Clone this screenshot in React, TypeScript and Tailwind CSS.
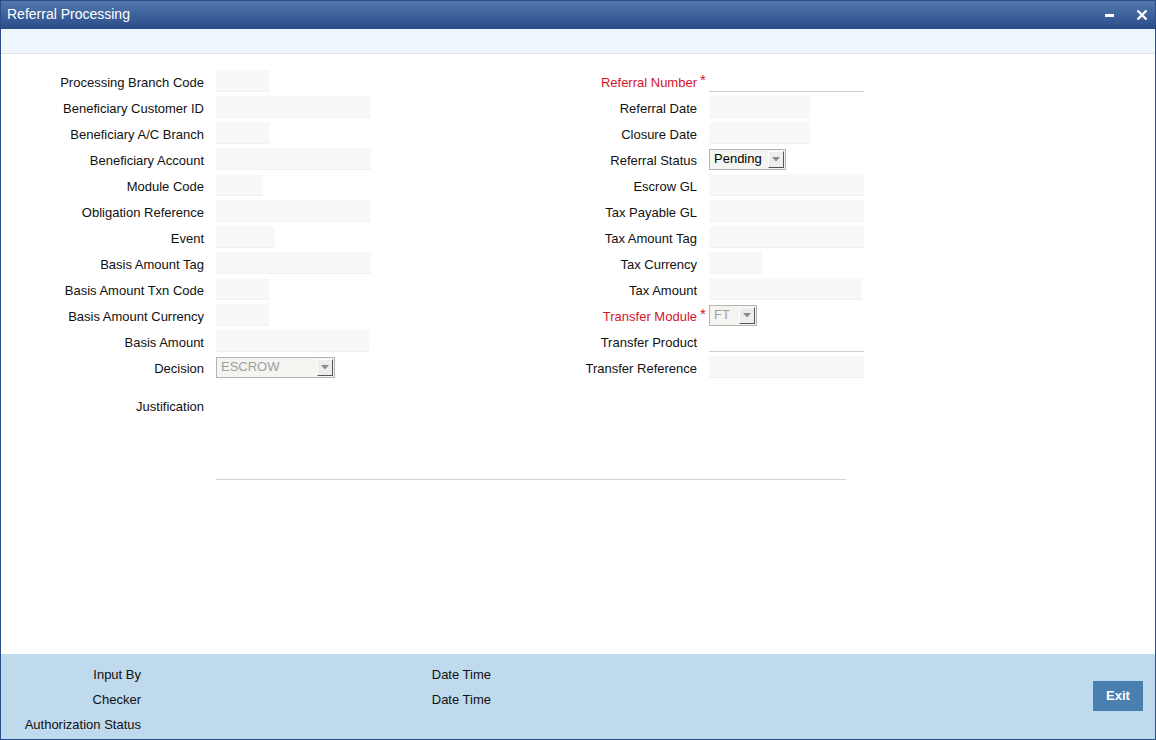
import React from "react";

type Field =
  | { kind: "input"; w: number }
  | { kind: "line"; w: number }
  | { kind: "select"; w: number; value: string; disabled?: boolean };

interface Row {
  label: string;
  required?: boolean;
  field: Field;
}

const leftRows: Row[] = [
  { label: "Processing Branch Code", field: { kind: "input", w: 53 } },
  { label: "Beneficiary Customer ID", field: { kind: "input", w: 155 } },
  { label: "Beneficiary A/C Branch", field: { kind: "input", w: 53 } },
  { label: "Beneficiary Account", field: { kind: "input", w: 155 } },
  { label: "Module Code", field: { kind: "input", w: 47 } },
  { label: "Obligation Reference", field: { kind: "input", w: 155 } },
  { label: "Event", field: { kind: "input", w: 59 } },
  { label: "Basis Amount Tag", field: { kind: "input", w: 155 } },
  { label: "Basis Amount Txn Code", field: { kind: "input", w: 53 } },
  { label: "Basis Amount Currency", field: { kind: "input", w: 53 } },
  { label: "Basis Amount", field: { kind: "input", w: 153 } },
  {
    label: "Decision",
    field: { kind: "select", w: 119, value: "ESCROW", disabled: true },
  },
];

const rightRows: Row[] = [
  { label: "Referral Number", required: true, field: { kind: "line", w: 155 } },
  { label: "Referral Date", field: { kind: "input", w: 101 } },
  { label: "Closure Date", field: { kind: "input", w: 101 } },
  { label: "Referral Status", field: { kind: "select", w: 77, value: "Pending" } },
  { label: "Escrow GL", field: { kind: "input", w: 155 } },
  { label: "Tax Payable GL", field: { kind: "input", w: 155 } },
  { label: "Tax Amount Tag", field: { kind: "input", w: 155 } },
  { label: "Tax Currency", field: { kind: "input", w: 53 } },
  { label: "Tax Amount", field: { kind: "input", w: 153 } },
  {
    label: "Transfer Module",
    required: true,
    field: { kind: "select", w: 48, value: "FT", disabled: true },
  },
  { label: "Transfer Product", field: { kind: "line", w: 155 } },
  { label: "Transfer Reference", field: { kind: "input", w: 155 } },
];

function FieldBox({ field }: { field: Field }) {
  if (field.kind === "input") {
    return (
      <input
        readOnly
        style={{ width: field.w }}
        className="h-[22px] bg-[#f8f8f8] border-b border-[#efefef] outline-none"
      />
    );
  }
  if (field.kind === "line") {
    return (
      <input
        readOnly
        style={{ width: field.w }}
        className="h-[22px] bg-white border-b border-[#cfcfcf] outline-none"
      />
    );
  }
  return (
    <div
      style={{ width: field.w }}
      className="h-[21px] flex items-center justify-between border border-[#b4b4b4] bg-[#f4f4f0] pl-[4px] pr-[1px]"
    >
      <span className={field.disabled ? "text-[#a0a0a0]" : "text-black"}>
        {field.value}
      </span>
      <span className="w-[16px] h-[17px] flex items-center justify-center bg-[#ededed] border-t border-l border-white border-r border-b border-r-[#555] border-b-[#555]">
        <svg width="8" height="5" viewBox="0 0 8 5">
          <path d="M0 0h8L4 4.5z" fill="#8a8a8a" />
        </svg>
      </span>
    </div>
  );
}

export default function App() {
  return (
    <div
      className="w-[1156px] h-[740px] flex flex-col bg-white border border-[#2b4d88] border-t-0 text-[13px] text-[#111]"
      style={{ fontFamily: '"Liberation Sans", Arial, sans-serif' }}
    >
      {/* Title bar */}
      <div className="h-[29px] shrink-0 flex items-center justify-between bg-gradient-to-b from-[#5279ae] to-[#2a4c89] border-t border-[#2b4d88] pl-[6px] pr-[7px]">
        <span className="text-white text-[14px] -translate-y-[1px]">
          Referral Processing
        </span>
        <div className="flex items-center gap-[21px]">
          <svg width="10" height="12" viewBox="0 0 10 12">
            <rect x="0" y="5" width="9" height="3" fill="#fff" />
          </svg>
          <svg width="12" height="12" viewBox="0 0 12 12">
            <path
              d="M1.5 1.5l9 9M10.5 1.5l-9 9"
              stroke="#fff"
              strokeWidth="2.4"
            />
          </svg>
        </div>
      </div>

      {/* Toolbar band */}
      <div className="h-[25px] shrink-0 bg-[#eef5fd] border-b border-[#dde3ea]" />

      {/* Form */}
      <div className="flex-1 pt-[16px]">
        <div className="flex">
          <div className="w-[400px] flex flex-col gap-[4px]">
            {leftRows.map((r) => (
              <div key={r.label} className="h-[22px] flex items-center">
                <div className="w-[203px] text-right translate-y-[2px]">
                  {r.label}
                </div>
                <div className="ml-[12px] flex">
                  <FieldBox field={r.field} />
                </div>
              </div>
            ))}
          </div>
          <div className="flex flex-col gap-[4px]">
            {rightRows.map((r) => (
              <div key={r.label} className="h-[22px] flex items-center">
                <div
                  className={`w-[296px] text-right translate-y-[2px] ${
                    r.required ? "text-[#d2142a]" : ""
                  }`}
                >
                  {r.label}
                </div>
                <div className="w-[12px] self-start pl-[3px] text-[15px] text-[#d2142a] leading-[20px]">
                  {r.required ? "*" : ""}
                </div>
                <div className="flex">
                  <FieldBox field={r.field} />
                </div>
              </div>
            ))}
          </div>
        </div>

        {/* Justification */}
        <div className="flex mt-[17px]">
          <div className="w-[203px] text-right leading-[22px] translate-y-[1px]">
            Justification
          </div>
          <textarea
            readOnly
            className="ml-[12px] w-[630px] h-[85px] resize-none bg-white border-b border-[#d4d4d4] outline-none"
          />
        </div>
      </div>

      {/* Footer */}
      <div className="h-[85px] shrink-0 flex items-center justify-between bg-[#bfd9ed] pr-[12px]">
        <div className="flex flex-col pt-[7px]">
          {[
            ["Input By", "Date Time"],
            ["Checker", "Date Time"],
            ["Authorization Status", ""],
          ].map(([a, b]) => (
            <div key={a} className="h-[25px] flex items-center">
              <div className="w-[140px] text-right">{a}</div>
              <div className="w-[350px] text-right">{b}</div>
            </div>
          ))}
        </div>
        <button className="w-[50px] h-[30px] bg-[#4a80af] text-white text-[13px] font-bold -translate-y-[1px]">
          Exit
        </button>
      </div>
    </div>
  );
}
